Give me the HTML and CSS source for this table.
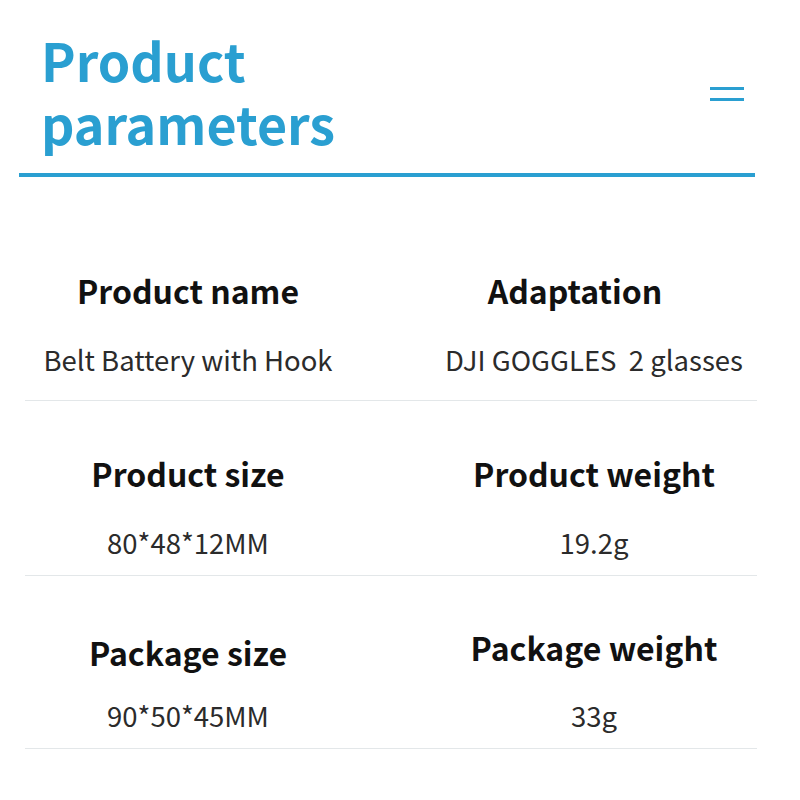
FILE: index.html
```html
<!DOCTYPE html>
<html lang="en">
<head>
<meta charset="utf-8">
<title>Product parameters</title>
<link rel="stylesheet" href="styles.css">
</head>
<body>
<header class="top">
  <h1 class="title">Product<br>parameters</h1>
  <button class="menu" aria-label="Menu">
    <svg width="36" height="16" viewBox="0 0 36 16"><path d="M1 2.5H35M1 13.5H35" stroke="#2a9fd1" stroke-width="3" fill="none"/></svg>
  </button>
</header>
<div class="rule"></div>
<section class="params">
  <div class="row row--first">
    <div class="cell"><h2 class="label">Product name</h2><p class="value">Belt Battery with Hook</p></div>
    <div class="cell"><h2 class="label label--shift">Adaptation</h2><p class="value">DJI GOGGLES&nbsp; 2 glasses</p></div>
  </div>
  <div class="row row--mid">
    <div class="cell"><h2 class="label">Product size</h2><p class="value">80*48*12MM</p></div>
    <div class="cell"><h2 class="label">Product weight</h2><p class="value">19.2g</p></div>
  </div>
  <div class="row row--last">
    <div class="cell"><h2 class="label">Package size</h2><p class="value">90*50*45MM</p></div>
    <div class="cell"><h2 class="label label--raised">Package weight</h2><p class="value">33g</p></div>
  </div>
</section>
</body>
</html>
```
FILE: styles.css
```css
* { box-sizing: border-box; }
html, body { margin: 0; padding: 0; background: #fff; }
body {
  font-family: "Noto Sans CJK SC", "Noto Sans", sans-serif;
  width: 800px;
  height: 800px;
  overflow: hidden;
}
.top {
  display: flex;
  justify-content: space-between;
  align-items: flex-start;
  padding: 28px 55px 0 41px;
}
.title {
  margin: 0;
  font-size: 52px;
  line-height: 63px;
  font-weight: 700;
  color: #2a9fd1;
}
.menu {
  margin-top: 58px;
  padding: 0;
  border: 0;
  background: none;
  display: block;
  line-height: 0;
}
.rule {
  margin: 19px 45px 0 19px;
  height: 4px;
  background: #2a9fd1;
}
.params {
  padding: 0 43px 0 25px;
}
.row {
  display: grid;
  grid-template-columns: 1fr 1fr;
  column-gap: 80px;
  border-bottom: 1px solid #e3e7e9;
}
.row--first { padding: 94px 0 24px; }
.row--mid { padding: 53px 0 16px; }
.row--last { padding: 57px 0 16px; }
.cell {
  text-align: center;
  display: flex;
  flex-direction: column;
}
.label {
  margin: 0;
  font-size: 32px;
  line-height: 38px;
  font-weight: 700;
  color: #111;
}
.value {
  margin: 33px 0 0;
  font-size: 27.5px;
  line-height: 34px;
  font-weight: 400;
  color: #2b2b2b;
  white-space: nowrap;
}
.row--last .value { margin-top: 27px; }
.label--shift { padding-right: 38px; }
.label--raised { margin-top: -5px; margin-bottom: 5px; }
```
